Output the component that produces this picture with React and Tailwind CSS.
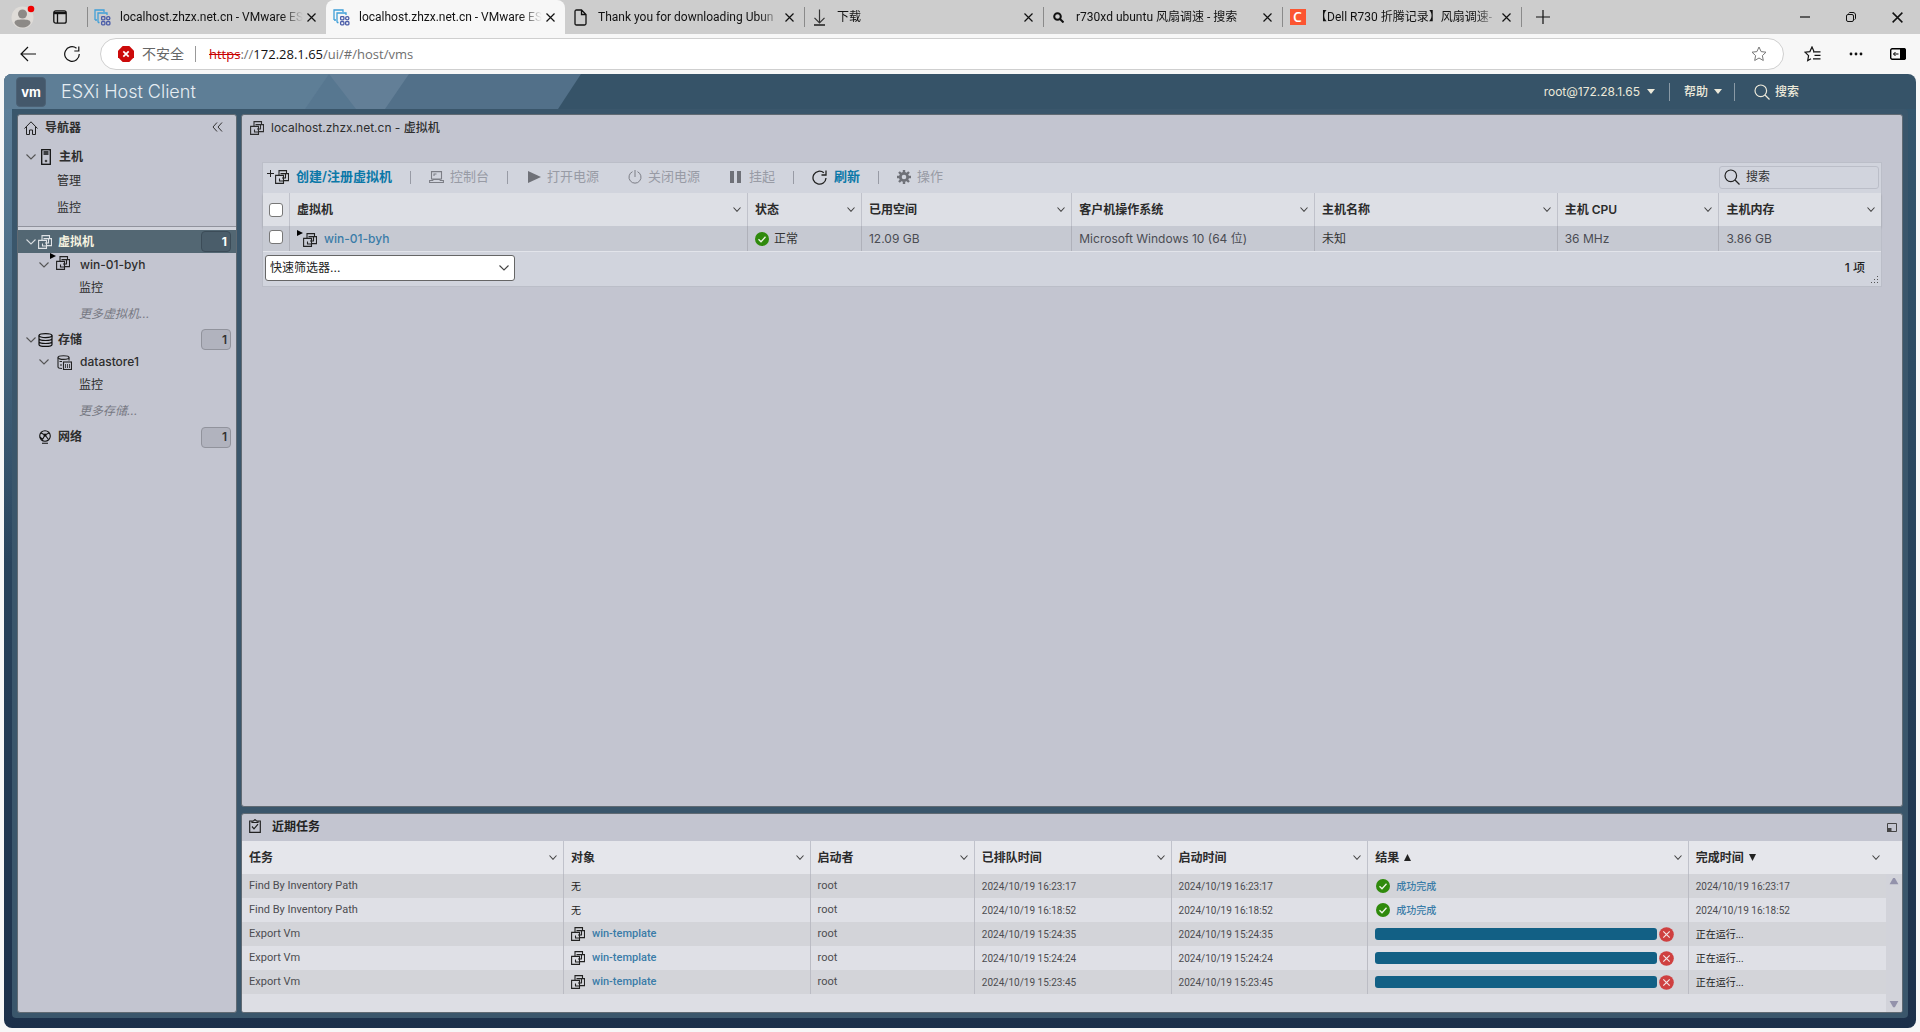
import React from "react";

const UI = "font-['Inter','Noto_Sans_CJK_SC',sans-serif]";
const CHROME = "font-['Open_Sans','Noto_Sans_CJK_SC',sans-serif]";

function VmIcon({ className = "" }) {
  return (
    <svg viewBox="0 0 14 14" className={"h-[14px] w-[14px] shrink-0 " + className} fill="none" stroke="currentColor" strokeWidth="1.1" aria-hidden="true">
      <path d="M4 5V.6h7.500v3M5.500 3.600h8v7H9" />
      <path d="M.6 5.400H8.500v8H.6z" />
      <path d="M4.500 8.500v2.500h4M10.500 4v4H7" />
    </svg>
  );
}

function RunningVmIcon() {
  return (
    <span className="flex h-[18px] shrink-0 items-start text-[#222]" aria-hidden="true">
      <svg viewBox="0 0 6 6" className="h-[6px] w-[6px] fill-black"><path d="M0 0l6 3-6 3z" /></svg>
      <VmIcon className="mt-[3px]" />
    </span>
  );
}

function Chevron({ className = "" }) {
  return (
    <svg viewBox="0 0 10 6" className={"h-[6px] w-[10px] shrink-0 " + className} fill="none" stroke="currentColor" strokeWidth="1.1" aria-hidden="true">
      <path d="M.5.5L5 5 9.5.5" />
    </svg>
  );
}

function CloseX({ className = "h-[9px] w-[9px]" }) {
  return (
    <svg viewBox="0 0 9 9" className={className} fill="none" stroke="#111" strokeWidth="1.2" aria-hidden="true">
      <path d="M.5.5l8 8M8.5.5l-8 8" />
    </svg>
  );
}

function SearchIcon({ className = "" }) {
  return (
    <svg viewBox="0 0 16 16" className={"h-4 w-4 shrink-0 " + className} fill="none" stroke="currentColor" strokeWidth="1.2" aria-hidden="true">
      <circle cx="6.8" cy="6.8" r="5.8" />
      <path d="M11 11l4.5 4.5" />
    </svg>
  );
}

function CheckIcon({ className = "" }) {
  return (
    <svg viewBox="0 0 14 14" className={"h-[14px] w-[14px] shrink-0 " + className} aria-hidden="true">
      <circle cx="7" cy="7" r="7" fill="#2f8a0c" />
      <path d="M3.5 7.2l2.5 2.6 4.5-5" fill="none" stroke="#eef3e6" strokeWidth="1.3" />
    </svg>
  );
}

function EsxFavicon() {
  return (
    <svg viewBox="0 0 17 17" className="h-[17px] w-[17px] shrink-0" fill="none" aria-hidden="true">
      <g stroke="#3f9fd8" strokeWidth="1.3">
        <path d="M1 11V1h9v2M1 11h2" />
        <path d="M4 13.5V4h9v2M4 13.5h1.5" />
      </g>
      <g stroke="#4a5ca8" strokeWidth="1.3">
        <rect x="7.6" y="7.6" width="3.3" height="3.3" rx=".8" />
        <rect x="12.6" y="7.6" width="3.3" height="3.3" rx="1.6" />
        <rect x="7.6" y="12.6" width="3.3" height="3.3" rx=".8" />
        <rect x="12.6" y="12.6" width="3.3" height="3.3" rx=".8" />
      </g>
    </svg>
  );
}

function PageIcon() {
  return (
    <svg viewBox="0 0 13 17" className="h-[17px] w-[13px] shrink-0" fill="none" stroke="#111" strokeWidth="1.3" aria-hidden="true">
      <path d="M1 2.5C1 1.5 1.5 1 2.5 1H7.5L12 5.5V14.5c0 1-.5 1.5-1.5 1.5h-8C1.500 16 1 15.500 1 14.5zM7.500 1v4.500H12" />
    </svg>
  );
}

function DownloadIcon() {
  return (
    <svg viewBox="0 0 13 17" className="h-[17px] w-[13px] shrink-0" fill="none" stroke="#333" strokeWidth="1.2" aria-hidden="true">
      <path d="M6.500 .5v13M1.500 8.800l5 5 5-5" />
      <path d="M1 16h11" stroke="#111" strokeWidth="1.4" />
    </svg>
  );
}

function FindIcon() {
  return (
    <svg viewBox="0 0 11 11" className="h-[11px] w-[11px] shrink-0" fill="none" stroke="#111" strokeWidth="2" aria-hidden="true">
      <circle cx="4.500" cy="4.500" r="3.300" />
      <path d="M7 7l3.500 3.500" />
    </svg>
  );
}

function CBadge() {
  return (
    <span className="flex h-4 w-4 shrink-0 items-center justify-center bg-[#fc5531] text-[14px] leading-4 font-semibold text-white">C</span>
  );
}

const tabs = [
  { icon: <EsxFavicon />, title: "localhost.zhzx.net.cn - VMware ES", sep: true },
  { icon: <EsxFavicon />, title: "localhost.zhzx.net.cn - VMware ES", active: true },
  { icon: <PageIcon />, title: "Thank you for downloading Ubun" },
  { icon: <DownloadIcon />, title: "下载", sep: true },
  { icon: <FindIcon />, title: "r730xd ubuntu 风扇调速 - 搜索", sep: true },
  { icon: <CBadge />, title: "【Dell R730 折腾记录】风扇调速-", sep: true },
];

function BrowserTabs() {
  return (
    <div className="flex h-[34px] shrink-0 items-center bg-[#cdcdcd]">
      <button aria-label="个人资料" className="ml-[11px] h-[24px] w-[24px]">
        <svg viewBox="0 0 24 24" className="h-[24px] w-[24px]" aria-hidden="true">
          <circle cx="11.5" cy="12.500" r="11" fill="#dfdcd8" />
          <circle cx="11.500" cy="9" r="4.500" fill="#8d8a87" />
          <path d="M3.500 18c0-3 3-3.500 8-3.500s8 .5 8 3.500c-1 2.500-4 4.500-8 4.500s-7-2-8-4.500z" fill="#8d8a87" />
          <circle cx="20" cy="4" r="3.300" fill="#f00000" />
        </svg>
      </button>
      <button aria-label="标签操作" className="ml-[18px]">
        <svg viewBox="0 0 14 14" className="h-[14px] w-[14px]" fill="none" stroke="#111" strokeWidth="1.300" aria-hidden="true">
          <rect x=".8" y=".8" width="12.400" height="12.400" rx="2" />
          <path d="M1 3h12" strokeWidth="2.400" />
          <path d="M4.500 3v10" />
        </svg>
      </button>
      <div className="ml-5 flex h-full min-w-0 items-center">
        {tabs.map((t, i) => (
          <div
            key={i}
            className={
              t.active
                ? "flex h-full w-[239px] items-center rounded-t-lg bg-[#f7f7f7] pl-[7px]"
                : "flex h-full w-[239px] items-center"
            }
          >
            {!t.active && <span className={t.sep ? "mr-[6px] h-5 w-px bg-[#8a8a8a]" : "mr-[6px] h-5 w-px"} />}
            <span className="flex w-[17px] shrink-0 justify-center">{t.icon}</span>
            <span className="mr-1 ml-[9px] min-w-0 flex-1 overflow-hidden font-['Roboto','Noto_Sans_CJK_SC',sans-serif] text-[12px] leading-5 whitespace-nowrap text-[#111] [mask-image:linear-gradient(to_right,black_88%,transparent)]">
              {t.title}
            </span>
            <button aria-label="关闭标签" className="mr-[10px]"><CloseX /></button>
          </div>
        ))}
        <span className="h-5 w-px bg-[#8a8a8a]" />
      </div>
      <button aria-label="新建标签" className="ml-[14px]">
        <svg viewBox="0 0 14 14" className="h-[14px] w-[14px]" stroke="#111" strokeWidth="1.200" aria-hidden="true"><path d="M7 0v14M0 7h14" /></svg>
      </button>
      <div className="mr-[17px] ml-auto flex items-center gap-[36px]">
        <button aria-label="最小化"><svg viewBox="0 0 10 10" className="h-[10px] w-[10px]" stroke="#111" strokeWidth="1.200" aria-hidden="true"><path d="M0 5h10" /></svg></button>
        <button aria-label="还原">
          <svg viewBox="0 0 10 10" className="h-[10px] w-[10px]" fill="none" stroke="#111" aria-hidden="true">
            <rect x=".5" y="2.500" width="7" height="7" rx="1.500" />
            <path d="M2.500 1.500C3 .7 3.500.5 4 .5h3C8.500.5 9.500 1.500 9.500 3v3.500c0 .5-.3.800-1 1" />
          </svg>
        </button>
        <button aria-label="关闭"><CloseX className="h-[11px] w-[11px]" /></button>
      </div>
    </div>
  );
}

function StarPath() {
  return <path d="M8 1l2.100 4.600 4.900.600-3.600 3.400.9 4.900L8 12l-4.300 2.500.9-4.900L1 6.200l4.900-.6z" />;
}

function AddressBar() {
  return (
    <div className="flex h-10 shrink-0 items-center bg-[#f7f7f7]">
      <button aria-label="后退" className="ml-5">
        <svg viewBox="0 0 16 16" className="h-4 w-4" fill="none" stroke="#111" strokeWidth="1.200" aria-hidden="true"><path d="M16 8H1M8 1L1 8l7 7" /></svg>
      </button>
      <button aria-label="刷新页面" className="ml-7">
        <svg viewBox="0 0 16 16" className="h-4 w-4" fill="none" stroke="#111" strokeWidth="1.200" aria-hidden="true"><path d="M15.300 8A7.300 7.300 0 1 1 12.500 2.300M14.800 .5V5H10.300" /></svg>
      </button>
      <div className="ml-5 flex h-8 flex-1 items-center rounded-full border border-[#cfcfcf] bg-white pr-4 pl-[17px]">
        <svg viewBox="0 0 16 16" className="h-4 w-4 shrink-0" aria-hidden="true">
          <path d="M4.700 0h6.600L16 4.700v6.600L11.300 16H4.700L0 11.300V4.700z" fill="#cc0a0a" />
          <path d="M5.300 5.300l5.400 5.400M10.700 5.300l-5.400 5.400" stroke="#fff" strokeWidth="1.700" />
        </svg>
        <span className="ml-2 text-[14px] leading-5 text-[#666]">不安全</span>
        <span className="ml-[11px] h-4 w-px bg-[#999]" />
        <span className="ml-[13px] text-[13px] leading-5 text-[#6f6f6f]">
          <span className="text-[#c80000] line-through">https</span>://<span className="text-[#111]">172.28.1.65</span>/ui/#/host/vms
        </span>
        <button aria-label="收藏" className="ml-auto">
          <svg viewBox="0 0 16 16" className="h-4 w-4" fill="none" stroke="#777" aria-hidden="true"><StarPath /></svg>
        </button>
      </div>
      <button aria-label="收藏夹" className="ml-5">
        <svg viewBox="0 0 17 16" className="h-4 w-[17px]" fill="none" stroke="#111" strokeWidth="1.200" aria-hidden="true">
          <path d="M10 5.600L8 1 5.900 5.600 1 6.200l3.600 3.400-.9 4.900L7 12.700" />
          <path d="M9 5.800h7.500M10.500 9.300h6M9 12.800h7.500" />
        </svg>
      </button>
      <button aria-label="设置及其他" className="ml-7">
        <svg viewBox="0 0 14 4" className="h-1 w-[14px]" fill="#111" aria-hidden="true"><circle cx="2" cy="2" r="1.400" /><circle cx="7" cy="2" r="1.400" /><circle cx="12" cy="2" r="1.400" /></svg>
      </button>
      <button aria-label="侧栏" className="mr-[14px] ml-[27px]">
        <svg viewBox="0 0 16 12" className="h-3 w-4" aria-hidden="true">
          <rect x=".7" y=".7" width="14.600" height="10.600" rx="1.500" fill="none" stroke="#000" strokeWidth="1.400" />
          <path d="M10 0h4.500L16 1.500v9L14.500 12H10z" />
          <path d="M8.500 6h-5M5.500 4l-2 2 2 2" fill="none" stroke="#000" />
        </svg>
      </button>
    </div>
  );
}

function Caret() {
  return <svg viewBox="0 0 8 5" className="h-[5px] w-2 fill-current" aria-hidden="true"><path d="M0 0h8L4 5z" /></svg>;
}

function AppHeader() {
  return (
    <header className="relative flex h-[35px] shrink-0 items-center overflow-hidden rounded-t-lg bg-[#365368]">
      <svg viewBox="0 0 600 35" className="absolute top-0 left-0 h-[35px] w-[600px]" aria-hidden="true">
        <path d="M0 0H577L554 35H0z" fill="#527089" />
        <path d="M0 0H405L381 35H0z" fill="#637f97" />
        <path d="M0 0H325L301 35H0z" fill="#5e7e96" />
        <path d="M325 0L352 35H301z" fill="#577790" />
      </svg>
      <span className="relative ml-3 flex h-[30px] w-[30px] items-center justify-center rounded-sm border border-[#4c6175] bg-[#44586b] text-[13px] leading-4 font-bold text-white">vm</span>
      <h1 className="relative ml-[15px] text-[18px] leading-6 font-light text-[#e6edf2]">ESXi Host Client</h1>
      <div className="relative mr-[117px] ml-auto flex items-center text-[12px] leading-5 text-[#ece9da]">
        <button className="flex items-center gap-[7px]">root@172.28.1.65 <Caret /></button>
        <span className="mx-[14px] h-[18px] w-px bg-[#8a9aa6]" />
        <button className="flex items-center gap-[6px] text-[12px] font-medium">帮助 <Caret /></button>
        <span className="mr-[19px] ml-3 h-[18px] w-px bg-[#8a9aa6]" />
        <button className="flex items-center gap-1 text-[12px] font-medium"><SearchIcon className="mr-px" />搜索</button>
      </div>
    </header>
  );
}

function Badge({ children, dark }) {
  return (
    <span className={
      dark
        ? "mr-[5px] ml-auto flex h-[21px] w-[30px] items-center justify-end rounded-sm border border-[#3c4c58] bg-[#4a5d6a] pr-[3px] text-[12px] font-bold text-white"
        : "mr-[5px] ml-auto flex h-[21px] w-[30px] items-center justify-end rounded-sm border border-[#91939c] bg-[#b1b3be] pr-[3px] text-[12px] text-[#333]"
    }>{children}</span>
  );
}

function Navigator() {
  return (
    <nav className="flex w-[220px] shrink-0 flex-col overflow-hidden rounded-[3px] border border-[#606a73] bg-[#c3c5d0] text-[12px] text-[#2d2d2d]">
      <div className="flex h-[26px] items-center pl-[6px] font-semibold">
        <svg viewBox="0 0 14 14" className="h-[14px] w-[14px]" fill="none" stroke="#222" aria-hidden="true">
          <path d="M.5 7.500L7 .8l6.500 6.700M2.500 6v7.500h3V9h3v4.500h3V6" />
        </svg>
        <span className="ml-[7px]">导航器</span>
        <button aria-label="折叠" className="mr-[13px] mb-[3px] ml-auto">
          <svg viewBox="0 0 11 10" className="h-[10px] w-[11px]" fill="none" stroke="#333" aria-hidden="true"><path d="M5 .5L1 5l4 4.500M10 .5L6 5l4 4.500" /></svg>
        </button>
      </div>
      <a href="#host" className="flex h-[32px] items-center pl-2 font-semibold">
        <Chevron className="text-[#555]" />
        <svg viewBox="0 0 10 16" className="ml-[5px] h-4 w-[10px]" fill="none" stroke="#111" strokeWidth="1.300" aria-hidden="true">
          <rect x=".7" y=".7" width="8.600" height="14.600" /><path d="M2.500 3h5M2.500 5h5" /><circle cx="5" cy="12" r="1.300" fill="#444" stroke="none" />
        </svg>
        <span className="ml-2">主机</span>
      </a>
      <a href="#manage" className="flex h-[16px] items-center pl-[39px]">管理</a>
      <a href="#monitor" className="flex h-[37px] items-center pl-[39px]">监控</a>
      <div className="h-1 border-t border-[#91939d] bg-[#d2d4dc]" />
      <a href="#vms" className="flex h-[23px] items-center bg-[#536773] pl-2 font-bold text-[#f6f3e0]">
        <Chevron className="text-[#d5dadd]" />
        <VmIcon className="ml-[2px] text-[#dfe3e6]" />
        <span className="ml-[6px]">虚拟机</span>
        <Badge dark>1</Badge>
      </a>
      <a href="#vm1" className="flex h-[24px] items-center pl-[21px] font-medium">
        <Chevron className="text-[#555]" />
        <span className="mb-[6px] ml-[1px] flex"><RunningVmIcon /></span>
        <span className="ml-[10px]">win-01-byh</span>
      </a>
      <a href="#vm1-monitor" className="flex h-[22px] items-center pl-[61px]">监控</a>
      <a href="#more-vms" className="flex h-[29px] items-center pl-[61px] text-[#777983] italic">更多虚拟机...</a>
      <a href="#storage" className="flex h-[23px] items-center pl-2 font-semibold">
        <Chevron className="text-[#555]" />
        <svg viewBox="0 0 15 14" className="ml-[2px] h-[14px] w-[15px]" fill="none" stroke="#111" strokeWidth="1.200" aria-hidden="true">
          <ellipse cx="7.500" cy="2.600" rx="6.500" ry="2" /><path d="M1 2.600v8.800c0 1.200 3 2 6.500 2s6.500-.8 6.500-2V2.600M1 5.500c0 1.200 3 2 6.500 2s6.500-.8 6.500-2M1 8.500c0 1.200 3 2 6.500 2s6.500-.8 6.500-2" />
        </svg>
        <span className="ml-[5px]">存储</span>
        <Badge>1</Badge>
      </a>
      <a href="#ds1" className="flex h-[22px] items-center pl-[21px] font-medium">
        <Chevron className="text-[#555]" />
        <svg viewBox="0 0 15 15" className="ml-2 h-[15px] w-[15px]" fill="none" stroke="#222" strokeWidth="1.100" aria-hidden="true">
          <ellipse cx="6.500" cy="2.600" rx="5.500" ry="1.800" /><path d="M1 2.600v9.400c0 .8 1.500 1.400 4 1.500M12 2.600v2.800M2.500 6.500h2.500M3 10h2" />
          <rect x="6.500" y="7" width="8" height="7.500" /><path d="M8.500 9v4M10.500 9v4M12.500 9v4" strokeWidth=".8" />
        </svg>
        <span className="ml-2">datastore1</span>
      </a>
      <a href="#ds1-monitor" className="flex h-[24px] items-center pl-[61px]">监控</a>
      <a href="#more-ds" className="flex h-[28px] items-center pl-[61px] text-[#777983] italic">更多存储...</a>
      <a href="#network" className="flex h-[24px] items-center pl-5 font-semibold">
        <svg viewBox="0 0 14 14" className="h-[14px] w-[14px]" fill="none" stroke="#111" strokeWidth="1.100" aria-hidden="true">
          <circle cx="7" cy="6" r="5.300" /><path d="M3 3l4 2 4-2M7 5L4.500 9.500M7 5l3.500 4.500M2 7l2.500 2.500M4 13.200h6" /><circle cx="7" cy="5" r="1" fill="#111" />
        </svg>
        <span className="ml-[6px]">网络</span>
        <Badge>1</Badge>
      </a>
    </nav>
  );
}

function ToolButton({ icon, children, active }) {
  return (
    <button className={active ? "flex items-center gap-[7px] font-semibold text-[#0b78a8]" : "flex items-center gap-[6px] text-[#989ba5]"}>
      {icon}
      {children}
    </button>
  );
}

function Toolbar() {
  const sep = "h-[13px] w-px bg-[#989ba5]";
  return (
    <div className="flex h-[30px] items-center pr-[2px] pb-[2px] pl-[4px] text-[13px]">
      <ToolButton active icon={
        <span className="flex text-[#222]">
          <svg viewBox="0 0 8 8" className="h-2 w-2" stroke="#222" aria-hidden="true"><path d="M3.500 0v7M0 3.500h7" /></svg>
          <VmIcon />
        </span>
      }>创建/注册虚拟机</ToolButton>
      <span className={"mr-[18px] ml-[18px] " + sep} />
      <ToolButton icon={
        <svg viewBox="0 0 15 12" className="h-3 w-[15px]" fill="none" stroke="#7c7e86" strokeWidth="1.100" aria-hidden="true"><path d="M2.500 8V.6h10V8zM.6 9.500h2.900L4.500 8.500h6l1 1h2.900v2H.6zM5 5V3h2.500" /></svg>
      }>控制台</ToolButton>
      <span className={"mr-5 ml-[18px] " + sep} />
      <ToolButton icon={<svg viewBox="0 0 13 12" className="h-3 w-[13px]" fill="#6f7178" aria-hidden="true"><path d="M0 0l13 6-13 6z" /></svg>}>打开电源</ToolButton>
      <span className="w-[29px]" />
      <ToolButton icon={
        <svg viewBox="0 0 14 14" className="h-[14px] w-[14px]" fill="none" stroke="#7c7e86" aria-hidden="true"><path d="M4.500 1.700a6 6 0 1 0 5 0M7 0v7" /></svg>
      }>关闭电源</ToolButton>
      <span className="w-[30px]" />
      <ToolButton icon={<svg viewBox="0 0 11 12" className="mr-[2px] h-3 w-[11px]" fill="#6f7178" aria-hidden="true"><path d="M0 0h4v12H0zM7 0h4v12H7z" /></svg>}>挂起</ToolButton>
      <span className={"mr-[18px] ml-[18px] " + sep} />
      <ToolButton active icon={
        <svg viewBox="0 0 15 15" className="h-[15px] w-[15px]" fill="none" stroke="#222" strokeWidth="1.300" aria-hidden="true"><path d="M14 8A6.500 6.500 0 1 1 11.800 2.800M14 .5v4.500H9.500" /></svg>
      }>刷新</ToolButton>
      <span className={"mr-[18px] ml-[18px] " + sep} />
      <ToolButton icon={
        <svg viewBox="0 0 14 14" className="h-[14px] w-[14px]" fill="none" stroke="#6f7178" aria-hidden="true">
          <circle cx="7" cy="7" r="3.700" strokeWidth="2.800" />
          <path d="M7 0v2.500M7 11.500V14M0 7h2.500M11.500 7H14M2 2l2 2M10 10l2 2M12 2l-2 2M4 10l-2 2" strokeWidth="2.400" />
        </svg>
      }>操作</ToolButton>
      <label className="ml-auto flex h-[23px] w-[160px] items-center gap-[6px] rounded-[3px] border border-[#bbbec8] pl-1 text-[#222]">
        <SearchIcon />
        <input aria-label="搜索" placeholder="搜索" className="w-full min-w-0 bg-transparent text-[12px] placeholder-[#333] outline-none" />
      </label>
    </div>
  );
}

function Head({ children, last, sort, span, pad = "pr-[6px]" }) {
  return (
    <th colSpan={span} className={"h-[33px] pl-[7px] text-left text-[12px] font-semibold text-[#2b2b2b] " + pad + (last ? "" : " border-r border-[#c0c2cb]")}>
      <span className="flex items-center gap-[5px]">
        {children}
        {sort && <svg viewBox="0 0 7 7" className="h-[7px] w-[7px] fill-[#222]" aria-hidden="true">{sort === "up" ? <path d="M3.500 0L7 7H0z" /> : <path d="M0 0h7L3.500 7z" />}</svg>}
        <svg viewBox="0 0 8 5" className="ml-auto h-[5px] w-2" fill="none" stroke="#444" strokeWidth="1.100" aria-hidden="true"><path d="M.5.500L4 4.300 7.500.500" /></svg>
      </span>
    </th>
  );
}

function VmPanel() {
  const td = "border-r border-[#afb1ba] pl-[7px]";
  const box = "block h-[14px] w-[14px] appearance-none rounded-[3px] border border-[#777] bg-white";
  return (
    <section className="flex min-h-0 flex-1 flex-col overflow-hidden rounded-[3px] border border-[#606a73] bg-[#c3c5d0]">
      <h2 className="flex h-[27px] items-center pb-[1px] pl-2 text-[12px] text-[#2d2d2d]">
        <VmIcon /><span className="ml-[7px]">localhost.zhzx.net.cn - <span className="font-medium">虚拟机</span></span>
      </h2>
      <div className="mx-5 mt-5 border border-[#bbbec8] bg-[#d1d4dd]">
        <Toolbar />
        <table className="w-full table-fixed border-separate border-spacing-0">
          <colgroup>
            <col className="w-[27px]" /><col className="w-[28.300%]" /><col className="w-[7.050%]" /><col className="w-[13%]" /><col className="w-[15%]" /><col className="w-[15%]" /><col className="w-[10%]" /><col />
          </colgroup>
          <thead className="bg-[#dddfe5] shadow-[0_2px_2px_#9fa1aa]">
            <tr>
              <th className="border-r border-[#c0c2cb] pl-[6px]"><input type="checkbox" aria-label="全选" className={box} /></th>
              <Head>虚拟机</Head><Head>状态</Head><Head>已用空间</Head><Head>客户机操作系统</Head><Head>主机名称</Head><Head>主机 CPU</Head><Head last>主机内存</Head>
            </tr>
          </thead>
          <tbody className="bg-[#c6c9d2] text-[12px] text-[#4a4c52]">
            <tr className="h-[25px]">
              <td className="border-r border-[#afb1ba] pb-[3px] pl-[6px]"><input type="checkbox" aria-label="选择 win-01-byh" className={box} /></td>
              <td className={td}>
                <span className="flex items-center">
                  <RunningVmIcon />
                  <a href="#vm1" className="ml-[7px] font-medium text-[#3a7ca8]">win-01-byh</a>
                </span>
              </td>
              <td className={td}><span className="flex items-center gap-[5px] text-[#333]"><CheckIcon />正常</span></td>
              <td className={td}>12.09 GB</td>
              <td className={td}>Microsoft Windows 10 (64 位)</td>
              <td className={td + " text-[#333]"}>未知</td>
              <td className={td}>36 MHz</td>
              <td className="pl-[7px]">3.86 GB</td>
            </tr>
          </tbody>
        </table>
        <div className="flex h-[35px] items-center border-t border-[#e2e4ea] pb-[2px] pl-[2px]">
          <div className="grid items-center">
            <select aria-label="快速筛选器" className="col-start-1 row-start-1 h-[26px] w-[250px] appearance-none rounded-[3px] border border-[#666] bg-white pl-1 text-[12px] text-[#222]">
              <option>快速筛选器...</option>
            </select>
            <Chevron className="pointer-events-none col-start-1 row-start-1 mr-[6px] justify-self-end text-[#444]" />
          </div>
          <span className="ml-auto text-[12px] font-medium text-[#222]">1 项</span>
          <svg viewBox="0 0 8 8" className="mr-[2px] ml-[6px] h-2 w-2 self-end fill-[#555]" aria-hidden="true">
            <path d="M6 0h1v1H6zM6 3h1v1H6zM3 3h1v1H3zM6 6h1v1H6zM3 6h1v1H3zM0 6h1v1H0z" />
          </svg>
        </div>
      </div>
    </section>
  );
}

const tasks = [
  { name: "Find By Inventory Path", queued: "2024/10/19 16:23:17", done: "2024/10/19 16:23:17" },
  { name: "Find By Inventory Path", queued: "2024/10/19 16:18:52", done: "2024/10/19 16:18:52" },
  { name: "Export Vm", target: "win-template", queued: "2024/10/19 15:24:35" },
  { name: "Export Vm", target: "win-template", queued: "2024/10/19 15:24:24" },
  { name: "Export Vm", target: "win-template", queued: "2024/10/19 15:23:45" },
];

function TaskPanel() {
  const td = "border-r border-[#bbbcc4] pl-[7px]";
  return (
    <section className="shrink-0 overflow-hidden rounded-[3px] border border-[#606a73] bg-[#c3c5d0]">
      <h2 className="flex h-[27px] items-center pr-[5px] pb-[1px] pl-[7px] text-[12px] font-semibold text-[#222]">
        <svg viewBox="0 0 12 14" className="mb-[2px] h-[14px] w-3" fill="none" stroke="#222" strokeWidth="1.200" aria-hidden="true">
          <path d="M3 2H.7v11.300h10.600V2H9M3 3.500V2h1.500L6 .6 7.500 2H9v1.500zM3 7.500l2 2.300 4-4.600" />
        </svg>
        <span className="ml-[11px]">近期任务</span>
        <button aria-label="最大化" className="ml-auto">
          <svg viewBox="0 0 10 9" className="h-[9px] w-[10px]" aria-hidden="true"><path d="M.5.500h9v8h-9z" fill="none" stroke="#444" /><path d="M0 5h4.500v4H0z" fill="#444" /></svg>
        </button>
      </h2>
      <table className="w-full table-fixed border-separate border-spacing-0 font-['Roboto','Noto_Sans_CJK_SC',sans-serif]">
        <colgroup>
          <col className="w-[19.400%]" /><col className="w-[14.850%]" /><col className="w-[9.900%]" /><col className="w-[11.850%]" /><col className="w-[11.850%]" /><col className="w-[19.300%]" /><col /><col className="w-4" />
        </colgroup>
        <thead className="bg-[#e5e6eb] shadow-[0_2px_2px_#b2b3ba]">
          <tr>
            <Head>任务</Head><Head>对象</Head><Head>启动者</Head><Head>已排队时间</Head><Head>启动时间</Head><Head sort="up">结果</Head><Head last span={2} sort="down" pad="pr-[22px]">完成时间</Head>
          </tr>
        </thead>
        <tbody className="text-[10px] text-[#4c4c50]">
          {tasks.map((t, i) => (
            <tr key={i} className="h-6 odd:bg-[#d3d4d9] even:bg-[#dfe0e6]">
              <td className={td + " text-[11px]"}>{t.name}</td>
              <td className={td}>
                {t.target ? (
                  <span className="flex items-center gap-[7px]"><VmIcon className="text-[#222]" /><a href="#vm" className="text-[11px] font-medium text-[#3a7ca8]">{t.target}</a></span>
                ) : <span className="text-[#222]">无</span>}
              </td>
              <td className={td + " text-[11px]"}>root</td>
              <td className={td}>{t.queued}</td>
              <td className={td}>{t.queued}</td>
              <td className={td}>
                {t.done ? (
                  <span className="flex items-center gap-[6px]"><CheckIcon className="ml-px" /><a href="#done" className="font-medium text-[#3a7ca8]">成功完成</a></span>
                ) : (
                  <span className="flex items-center gap-[2px] pr-[14px]">
                    <span className="h-3 flex-1 rounded-[3px] bg-[#126085]" />
                    <button aria-label="取消任务">
                      <svg viewBox="0 0 15 15" className="block h-[15px] w-[15px]" aria-hidden="true"><circle cx="7.500" cy="7.500" r="7.300" fill="#cf4040" /><path d="M4.300 4.300l6.400 6.400M10.700 4.300l-6.400 6.400" stroke="#f3e5e5" strokeWidth="1.200" /></svg>
                    </button>
                  </span>
                )}
              </td>
              <td className="pl-[7px]">{t.done || <span className="text-[#222]">正在运行...</span>}</td>
              {i === 0 && (
                <td rowSpan={6} className="bg-[#d2d3da]">
                  <span className="flex h-[130px] flex-col items-center justify-between">
                    <svg viewBox="0 0 10 8" className="h-[7px] w-[10px] fill-[#9392ab]" aria-hidden="true"><path d="M4 0h2l4 7H0z" /></svg>
                    <svg viewBox="0 0 10 8" className="h-[7px] w-[10px] fill-[#9392ab]" aria-hidden="true"><path d="M0 0h10L6 7H4z" /></svg>
                  </span>
                </td>
              )}
            </tr>
          ))}
          <tr className="h-[18px] bg-[#dddee4]"><td colSpan={7} /></tr>
        </tbody>
      </table>
    </section>
  );
}

export default function App() {
  return (
    <div className={"flex min-h-screen flex-col bg-[#f7f7f7] " + CHROME}>
      <BrowserTabs />
      <AddressBar />
      <div className={"mx-1 mb-1 flex flex-1 flex-col " + UI}>
        <AppHeader />
        <div className="flex flex-1 rounded-b-lg bg-linear-to-b from-[#34566d] to-[#1c304a] pr-2">
          <div className="mb-[10px] w-2 shrink-0 bg-linear-to-b from-[#5d7f99] to-transparent to-50%" />
          <main className="mb-[10px] flex min-w-0 flex-1 gap-1 rounded-[4px] bg-[#3a566b] p-[5px]">
            <Navigator />
            <div className="flex min-w-0 flex-1 flex-col gap-[6px]">
              <VmPanel />
              <TaskPanel />
            </div>
          </main>
        </div>
      </div>
    </div>
  );
}
